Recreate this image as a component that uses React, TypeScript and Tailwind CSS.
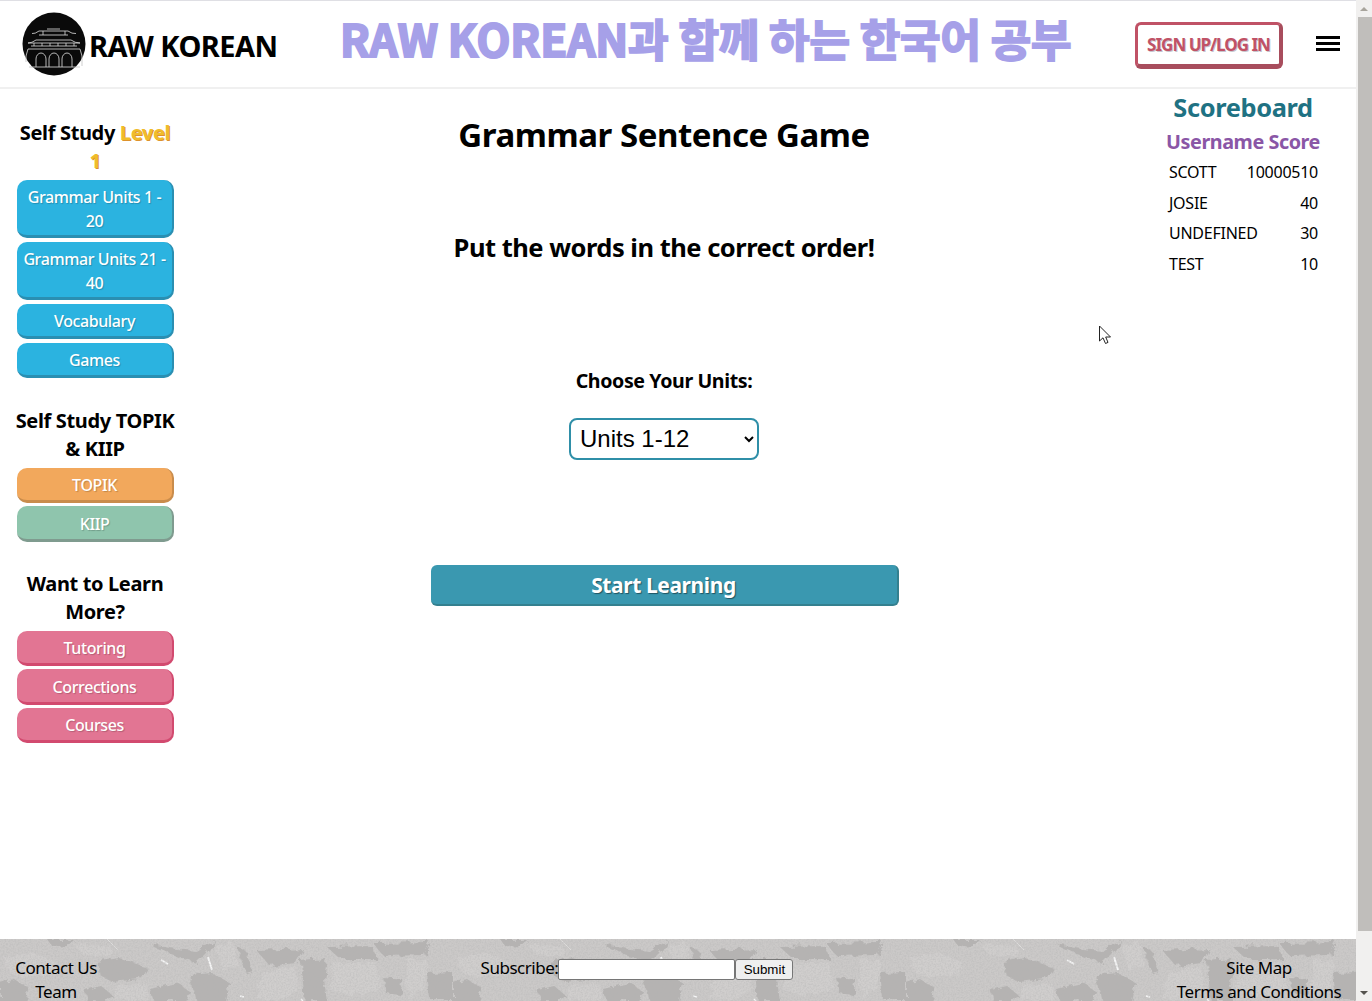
import React from "react";

const ss = "font-['Noto_Sans',sans-serif]";

function Logo() {
  return (
    <svg width="64" height="64" viewBox="0 0 64 64" className="shrink-0">
      <circle cx="32" cy="32" r="31.5" fill="#0a0a0a" />
      <g fill="none" stroke="#c9c9c9" strokeWidth="0.9">
        <path d="M10 21.5 Q13 22 17 19 L46 19 Q50 22 54 21.5" />
        <path d="M17 23 H46 M21 19 V23 M43 19 V23 M25 17 H38" />
        <path d="M14 28 Q10 31 6 31 L58 31 Q53 31 49 28 Z" />
        <path d="M9 34 H55 M12 31 V34 M20 31 V34 M28 31 V34 M36 31 V34 M44 31 V34 M52 31 V34" />
        <path d="M6 37 H58 L60 44 V54 M6 37 L4 44 V50" />
        <path d="M14 55 V47 A5 6 0 0 1 24 47 V55 M27 55 V47 A5 6 0 0 1 37 47 V55 M40 55 V47 A5 6 0 0 1 50 47 V55" />
        <path d="M7 55 H58" />
      </g>
    </svg>
  );
}

function Btn({ children, color, edge, h }: { children: React.ReactNode; color: string; edge: string; h: string }) {
  return (
    <div className={`${color} ${edge} ${h} w-[157px] rounded-[10px] border-r-2 border-b-[3px] px-1 pt-[2px] flex items-center justify-center text-center text-white font-medium text-[16px] leading-[24px] tracking-[-0.4px] [text-shadow:1px_1px_1px_rgba(0,0,0,0.2)]`}>
      <span>{children}</span>
    </div>
  );
}

function Heading({ children }: { children: React.ReactNode }) {
  return <div className="mr-[1px] text-center text-[20px] leading-[28px] font-bold tracking-[-0.35px] text-black">{children}</div>;
}

function FooterTexture() {
  const dark = [
    "47,0 73,0 66,6 52,7",
    "97,24 120,20 147,28 140,40 112,43 100,36",
    "150,6 172,16 196,24 212,8 214,0 196,12 176,10",
    "190,36 212,34 230,44 226,63 196,63",
    "150,50 176,44 190,52 186,63 154,63",
    "237,8 246,12 253,32 246,34",
    "257,12 303,10 296,24 270,27",
    "300,22 327,20 324,40 327,63 304,63",
    "327,8 372,7 377,20 340,20",
    "373,4 430,3 424,16 384,17",
    "427,34 453,33 453,60 430,60",
    "383,38 403,40 400,56 386,54",
    "0,44 14,40 30,50 24,63 0,63",
    "84,50 100,46 112,56 108,63 88,63",
  ];
  const light = [
    "4,18 34,14 56,22 50,38 24,38 8,32",
    "72,4 112,8 108,18 84,16",
    "116,46 146,44 150,58 130,63 114,60",
    "216,6 234,4 238,26 222,32",
    "262,34 296,28 300,50 280,62 256,60",
    "332,24 376,24 382,48 352,58 330,50",
    "406,20 428,22 424,50 408,60",
  ];
  return (
    <svg className="absolute inset-0 h-full w-full" aria-hidden="true">
      <defs>
        <filter id="grain" x="0" y="0" width="100%" height="100%">
          <feTurbulence type="fractalNoise" baseFrequency="0.6" numOctaves="2" seed="4" />
          <feColorMatrix values="0 0 0 0 0.45  0 0 0 0 0.45  0 0 0 0 0.45  0.9 0 0 0 -0.33" />
        </filter>
        <filter id="soft" x="-10%" y="-10%" width="120%" height="120%">
          <feTurbulence type="fractalNoise" baseFrequency="0.12" numOctaves="3" seed="7" result="n" />
          <feDisplacementMap in="SourceGraphic" in2="n" scale="9" />
          <feGaussianBlur stdDeviation="0.7" />
        </filter>
        <pattern id="rock" width="453" height="62" patternUnits="userSpaceOnUse">
          <rect width="453" height="62" fill="#cbc9c8" />
          <g filter="url(#soft)">
            {dark.map((p) => (
              <polygon key={p} points={p} fill="#b5b3b2" />
            ))}
            {light.map((p) => (
              <polygon key={p} points={p} fill="#d0cecd" />
            ))}
          </g>
          <path d="M161 21 L168 25 M208 18 L212 31" stroke="#f6f6f6" strokeWidth="2" fill="none" />
          <path d="M107 0 L118 11" stroke="#dedddc" strokeWidth="1" fill="none" />
          <path d="M240 57 L244 58 M301 60 L303 62" stroke="#f6f6f6" strokeWidth="1.5" fill="none" />
        </pattern>
      </defs>
      <rect width="100%" height="100%" fill="url(#rock)" />
      <rect width="100%" height="100%" filter="url(#grain)" />
    </svg>
  );
}

const scores: [string, string][] = [
  ["SCOTT", "10000510"],
  ["JOSIE", "40"],
  ["UNDEFINED", "30"],
  ["TEST", "10"],
];

export default function App() {
  return (
    <div className={`${ss} relative flex h-[1001px] w-[1372px] overflow-hidden bg-white text-black`}>
      <div className="flex w-[1356px] flex-col">
        <header className="flex h-[89px] shrink-0 items-center border-t border-t-[#dfdfe4] border-b-2 border-b-[#f0f0f0] pl-[22px]">
          <Logo />
          <div className="ml-[3px] mt-[3px] w-[251px] text-[29px] font-bold tracking-[-0.55px] whitespace-nowrap">RAW KOREAN</div>
          <div className="w-[736px] pb-[13px] font-['Noto_Sans_CJK_KR',sans-serif] text-[44px] leading-none font-bold tracking-[-0.1px] whitespace-nowrap text-[#a6a0e8] [-webkit-text-stroke:2px_#a6a0e8] [stroke-linejoin:round] [paint-order:stroke]">
            RAW KOREAN과 함께 하는 한국어 공부
          </div>
          <div className="ml-[59px] mt-[2px] flex h-[47px] w-[148px] items-center justify-center rounded-[6px] border-[3px] border-r-[4px] border-b-[5px] border-[#c05266] border-r-[#a84d5d] border-b-[#a84d5d] pt-[2px] text-[17px] font-bold tracking-[-1px] whitespace-nowrap text-[#c05266] [text-shadow:1px_1px_0_rgba(90,90,110,0.35)]">
            SIGN UP/LOG IN
          </div>
          <div className="mb-[1px] ml-[33px] flex w-6 flex-col gap-[3px]">
            <div className="h-[3px] bg-black" />
            <div className="h-[3px] bg-black" />
            <div className="h-[3px] bg-black" />
          </div>
        </header>

        <div className="flex min-h-0 flex-1">
          <aside className="flex w-[190px] shrink-0 flex-col items-center pt-[30px] pl-[1px]">
            <div className="w-[165px]">
              <Heading>
                Self Study{" "}
                <span className="text-[#f0bc2b] [text-shadow:1px_1px_0_#dd922c]">Level 1</span>
              </Heading>
            </div>
            <div className="mt-[5px] flex flex-col gap-[4px]">
              <Btn color="bg-[#2bb3e0]" edge="border-[#2a8fb2]" h="h-[58px]">Grammar Units 1 - 20</Btn>
              <Btn color="bg-[#2bb3e0]" edge="border-[#2a8fb2]" h="h-[58px]">Grammar Units 21 - 40</Btn>
              <Btn color="bg-[#2bb3e0]" edge="border-[#2a8fb2]" h="h-[35px]">Vocabulary</Btn>
              <Btn color="bg-[#2bb3e0]" edge="border-[#2a8fb2]" h="h-[35px]">Games</Btn>
            </div>
            <div className="mt-[29px] w-[165px]">
              <Heading>Self Study TOPIK &amp; KIIP</Heading>
            </div>
            <div className="mt-[5px] flex flex-col gap-[3px]">
              <Btn color="bg-[#f2a85c]" edge="border-[#c98c4c]" h="h-[35px]">TOPIK</Btn>
              <Btn color="bg-[#8fc5ad]" edge="border-[#7f9b8f]" h="h-[36px]">KIIP</Btn>
            </div>
            <div className="mt-[28px] w-[165px]">
              <Heading>Want to Learn More?</Heading>
            </div>
            <div className="mt-[5px] flex flex-col gap-[3px]">
              <Btn color="bg-[#e27593]" edge="border-[#d24a6f]" h="h-[35px]">Tutoring</Btn>
              <Btn color="bg-[#e27593]" edge="border-[#d24a6f]" h="h-[36px]">Corrections</Btn>
              <Btn color="bg-[#e27593]" edge="border-[#d24a6f]" h="h-[35px]">Courses</Btn>
            </div>
          </aside>

          <main className="flex w-[948px] shrink-0 flex-col items-center">
            <h1 className="mt-[21px] text-[33px] leading-[50px] font-bold tracking-[-0.45px]">Grammar Sentence Game</h1>
            <h2 className="mt-[67px] text-[25.5px] leading-[40px] font-bold tracking-[-0.5px]">Put the words in the correct order!</h2>
            <div className="mt-[99px] text-[19.6px] leading-[30px] font-bold tracking-[-0.4px]">Choose Your Units:</div>
            <select className="mt-[22px] h-[42px] w-[190px] rounded-[8px] border-2 border-[#2f8fa8] bg-white pb-[2px] pl-[5px] font-['Liberation_Sans',sans-serif] text-[24px] text-black">
              <option>Units 1-12</option>
            </select>
            <div className="mt-[105px] ml-[1px] flex h-[41px] w-[468px] items-center justify-center rounded-[6px] border-r-2 border-b-2 border-[#34808f] bg-[#3a98b0] pt-[2px] text-[21px] font-bold tracking-[-0.4px] text-white [text-shadow:1px_1px_1px_rgba(0,0,0,0.45)]">
              Start Learning
            </div>
          </main>

          <section className="flex w-[210px] shrink-0 flex-col items-center">
            <div className="text-[25.4px] leading-[36px] font-bold tracking-[-0.35px] text-[#1f7283]">Scoreboard</div>
            <div className="mt-[2px] text-[19.8px] leading-[30px] font-bold tracking-[-0.45px] text-[#8a56a6]">Username Score</div>
            <div className="ml-[1px] flex w-[149px] flex-col">
              {scores.map(([n, s]) => (
                <div key={n} className="flex h-[30.5px] items-center justify-between text-[16px] tracking-[-0.25px]">
                  <span>{n}</span>
                  <span>{s}</span>
                </div>
              ))}
            </div>
          </section>
        </div>

        <footer className="relative h-[62px] shrink-0 overflow-hidden">
          <FooterTexture />
          <div className="relative grid grid-cols-[112px_1fr_194px] pt-[17px] text-[17px] leading-[24px] tracking-[-0.48px]">
            <div className="text-center">
              <div>Contact Us</div>
              <div>Team</div>
            </div>
            <div className="flex items-start justify-center">
              <span>Subscribe:</span>
              <input className="mt-[3px] h-[21px] w-[177px] rounded-[2px] border border-[#767676] bg-white" />
              <button className="mt-[3px] h-[21px] w-[58px] rounded-[3px] border border-[#767676] bg-[#efefef] font-['Liberation_Sans',sans-serif] text-[13.3px] leading-none tracking-normal text-black">
                Submit
              </button>
            </div>
            <div className="text-center">
              <div>Site Map</div>
              <div className="whitespace-nowrap">Terms and Conditions</div>
            </div>
          </div>
        </footer>
      </div>

      <div className="flex w-4 shrink-0 flex-col bg-[#f1f0ef]">
        <div className="flex h-[17px] items-center justify-center">
          <div className="h-0 w-0 border-x-[4px] border-b-[4px] border-x-transparent border-b-[#a8a49c]" />
        </div>
        <div className="ml-[2px] h-[914px] bg-[#c0bebb]" />
        <div className="mt-auto flex h-[17px] items-center justify-center">
          <div className="h-0 w-0 border-x-[4px] border-t-[4px] border-x-transparent border-t-[#55534f]" />
        </div>
      </div>

      <svg className="absolute top-[325px] left-[1098px]" width="15" height="20" viewBox="0 0 15 20">
        <path d="M1.5 1 V16 L5 12.8 L7.5 18.5 L10 17.4 L7.7 12 H12.5 Z" fill="#fff" stroke="#222" strokeWidth="1" />
      </svg>
    </div>
  );
}
